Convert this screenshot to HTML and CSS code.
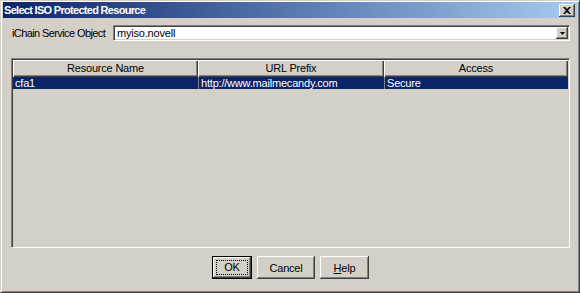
FILE: index.html
```html
<!DOCTYPE html>
<html lang="en">
<head>
    <meta charset="utf-8">
    <title>Select ISO Protected Resource</title>
    <link rel="stylesheet" href="styles.css">
</head>
<body>
    <div class="window">
        <div class="titlebar">
            <span class="title">Select ISO Protected Resource</span>
            <button class="close-btn">
                <svg width="8" height="7" viewBox="0 0 8 7"><path d="M0 0h2l2 2 2-2h2L5 3.5 8 7H6L4 5 2 7H0l3-3.5z" fill="#000"/></svg>
            </button>
        </div>

        <div class="content">
            <div class="field-row">
                <label class="field-label">iChain Service Object</label>
                <div class="combo">
                    <span class="combo-value">myiso.novell</span>
                    <span class="combo-arrow">
                        <svg width="5" height="3" viewBox="0 0 5 3"><path d="M0 0h5L2.5 3z" fill="#000"/></svg>
                    </span>
                </div>
            </div>

            <div class="table-frame">
                <div class="table-header">
                    <div class="th col-name">Resource Name</div>
                    <div class="th col-url">URL Prefix</div>
                    <div class="th col-access">Access</div>
                </div>
                <div class="table-row selected">
                    <div class="td col-name">cfa1</div>
                    <div class="td col-url">http://www.mailmecandy.com</div>
                    <div class="td col-access">Secure</div>
                </div>
            </div>

            <div class="button-group">
                <button class="btn btn-default"><span class="focus">OK</span></button>
                <button class="btn btn-cancel">Cancel</button>
                <button class="btn btn-help"><u>H</u>elp</button>
            </div>
        </div>
    </div>
</body>
</html>
```

FILE: styles.css
```css
* {
    margin: 0;
    padding: 0;
    box-sizing: border-box;
}

body {
    font-family: "Liberation Sans", Arial, sans-serif;
    font-size: 11px;
    letter-spacing: -0.2px;
    color: #000;
    background: #d4d0c8;
}

.window {
    width: 580px;
    height: 293px;
    background: #d4d0c8;
    border-top: 1px solid #d4d0c8;
    border-left: 1px solid #d4d0c8;
    border-right: 1px solid #404040;
    border-bottom: 1px solid #404040;
    box-shadow: inset 1px 1px 0 #fff, inset -1px -1px 0 #808080;
    padding: 1px 2px 1px 2px;
    display: flex;
    flex-direction: column;
}

.titlebar {
    height: 16px;
    background: linear-gradient(90deg, #0a246a 0%, #a6caf0 100%);
    display: flex;
    align-items: center;
    justify-content: space-between;
    padding: 0 2px 0 1px;
}

.title {
    color: #fff;
    font-family: "Liberation Sans", Arial, sans-serif;
    font-weight: bold;
    font-size: 11px;
    letter-spacing: -0.7px;
}

.close-btn {
    width: 16px;
    height: 13px;
    background: #d4d0c8;
    border: none;
    box-shadow: inset -1px -1px 0 #404040, inset 1px 1px 0 #fff, inset -2px -2px 0 #808080;
    display: flex;
    align-items: center;
    justify-content: center;
}

.content {
    flex: 1;
    padding: 7px 7px 12px 8px;
    display: flex;
    flex-direction: column;
}

.field-row {
    display: flex;
    align-items: center;
    height: 16px;
}

.field-label {
    width: 102px;
    white-space: nowrap;
    letter-spacing: -0.6px;
    padding-left: 1px;
}

.combo {
    flex: 1;
    height: 16px;
    background: #fff;
    border-top: 1px solid #808080;
    border-left: 1px solid #808080;
    border-right: 1px solid #fff;
    border-bottom: 1px solid #fff;
    box-shadow: inset 1px 1px 0 #404040, inset -1px -1px 0 #d4d0c8;
    display: flex;
    align-items: center;
    padding: 1px 1px 1px 2px;
}

.combo-value {
    flex: 1;
    padding-left: 1px;
}

.combo-arrow {
    width: 12px;
    height: 12px;
    background: #d4d0c8;
    box-shadow: inset -1px -1px 0 #404040, inset 1px 1px 0 #fff, inset -2px -2px 0 #808080;
    display: flex;
    align-items: center;
    justify-content: center;
}

.table-frame {
    height: 190px;
    margin-top: 17px;
    border-top: 1px solid #808080;
    border-left: 1px solid #808080;
    border-right: 1px solid #fff;
    border-bottom: 1px solid #fff;
    box-shadow: inset 1px 1px 0 #404040;
    padding: 1px 1px 0 1px;
}

.table-header,
.table-row {
    display: flex;
}

.th {
    height: 17px;
    line-height: 16px;
    text-align: center;
    background: #d4d0c8;
    box-shadow: inset 1px 1px 0 #fff, inset -1px -1px 0 #404040, inset -2px -2px 0 #808080;
}

.td {
    height: 12px;
    line-height: 12px;
    padding-left: 2px;
    border-left: 1px solid #808080;
}

.td:first-child {
    border-left: none;
}

.col-name {
    width: 185px;
}

.col-url {
    width: 186px;
}

.col-access {
    flex: 1;
}

.selected {
    background: #0a246a;
    color: #fff;
}

.button-group {
    display: flex;
    justify-content: center;
    gap: 5px;
    margin-top: auto;
}

.btn {
    font-family: "Liberation Sans", Arial, sans-serif;
    font-size: 11px;
    letter-spacing: -0.2px;
    height: 23px;
    padding: 0;
    background: #d4d0c8;
    border: none;
    box-shadow: inset -1px -1px 0 #404040, inset 1px 1px 0 #fff, inset -2px -2px 0 #808080;
    color: #000;
}

.btn-cancel {
    width: 58px;
}

.btn-help {
    width: 49px;
}

.btn-default {
    border: 1px solid #000;
    width: 40px;
}

.focus {
    display: inline-block;
    border: 1px dotted #000;
    width: 32px;
    height: 15px;
    line-height: 13px;
}
```
